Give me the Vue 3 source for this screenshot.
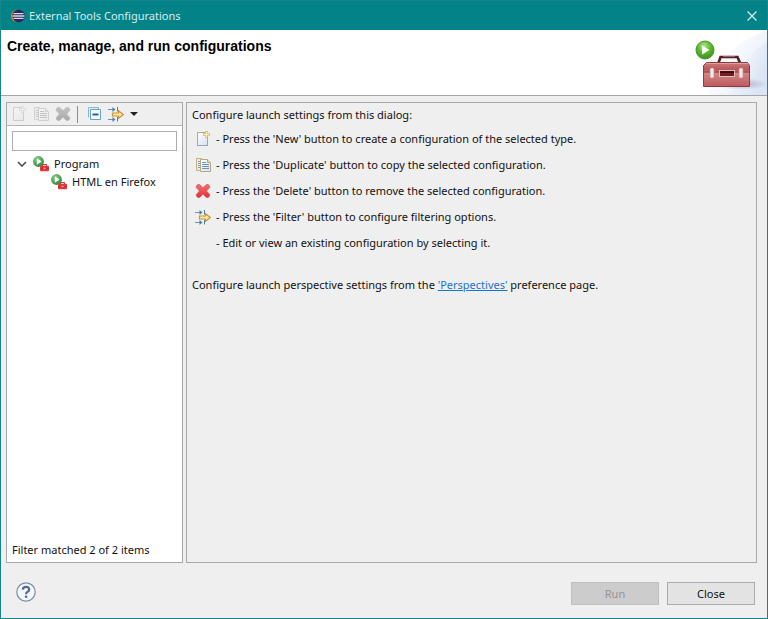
<script setup>
import { ref } from 'vue'

const filter = ref('')
const expanded = ref(true)

const tips = [
  { icon: 'new', text: "- Press the 'New' button to create a configuration of the selected type." },
  { icon: 'duplicate', text: "- Press the 'Duplicate' button to copy the selected configuration." },
  { icon: 'delete', text: "- Press the 'Delete' button to remove the selected configuration." },
  { icon: 'filter', text: "- Press the 'Filter' button to configure filtering options." },
  { icon: '', text: '- Edit or view an existing configuration by selecting it.' }
]
</script>

<template>
  <svg class="sprite" aria-hidden="true">
    <defs>
      <linearGradient id="paper" x1="0" y1="0" x2="1" y2="1">
        <stop offset="0" stop-color="#ffffff" />
        <stop offset="1" stop-color="#d3e1f3" />
      </linearGradient>
      <linearGradient id="redcross" x1="0" y1="0" x2="0" y2="1">
        <stop offset="0" stop-color="#f4726f" />
        <stop offset="1" stop-color="#e22f36" />
      </linearGradient>
      <radialGradient id="green" cx="0.4" cy="0.3" r="0.75">
        <stop offset="0" stop-color="#8ed08a" />
        <stop offset="0.55" stop-color="#4fa658" />
        <stop offset="1" stop-color="#2c8540" />
      </radialGradient>
      <symbol id="i-new" viewBox="0 0 16 16">
        <path d="M2.500 1.500h8l2 3v10h-10z" fill="url(#paper)" stroke="#b5a983" />
        <path d="M2.500 14.500h10v-6" fill="none" stroke="#95a5bb" />
        <path d="M11.500 0v7M8 3.500h7" stroke="#d8bd72" stroke-width="2.400" />
        <path d="M11.500 1v5M9 3.500h5" stroke="#fff2b8" />
      </symbol>
      <symbol id="i-duplicate" viewBox="0 0 16 16">
        <path d="M1.500 1.500h5l2 2v10h-7z" fill="#e6edf5" stroke="#c2b184" />
        <path d="M3 4.500h2M3 6.500h2M3 8.500h2M3 10.500h2" stroke="#7d9bc6" />
        <path d="M5.500 2.500h7l3 3v9h-10z" fill="url(#paper)" stroke="#b9a876" />
        <path d="M12.500 2.500v3h3" fill="#f0dda0" stroke="#b9a876" />
        <path d="M7 5.500h4M7 7.500h7M7 9.500h7M7 11.500h7" stroke="#6f90c2" />
      </symbol>
      <symbol id="i-delete" viewBox="0 0 16 16">
        <path d="M4.200 1.300 8 4.700l3.800-3.400q2.800.2 3.100 3L11.500 8l3.400 3.700q-.3 2.800-3.100 3L8 11.300l-3.800 3.400q-2.800-.2-3.100-3L4.500 8 1.100 4.300q.3-2.800 3.100-3z" fill="url(#redcross)" stroke="#d9585b" stroke-width=".8" />
      </symbol>
      <symbol id="i-filter" viewBox="0 0 16 16">
        <path d="M0 3.500h7M0 13.500h7" stroke="#6795b4" />
        <path d="m4.500 1 3 2.500-3 2.500zM4.500 11l3 2.500-3 2.500z" fill="#4d80a3" />
        <path d="M9.500 1v4.500M9.500 11v4.500" stroke="#4d80a3" />
        <path d="M4.500 7h6V4.800l4.800 3.700-4.800 3.700V10h-6z" fill="#fce9ad" stroke="#cd9232" stroke-width="1.200" />
      </symbol>
      <symbol id="i-collapse" viewBox="0 0 16 16">
        <path d="M2.500 11.500v-10h10v2" fill="#e2edf5" stroke="#8bb4cf" />
        <path d="M4.500 3.500h10v10h-10z" fill="#f3faff" stroke="#6aa3c8" />
        <path d="M6.500 8.500h6" stroke="#24679c" stroke-width="2" />
      </symbol>
      <symbol id="i-tool" viewBox="0 0 16 16">
        <circle cx="5.500" cy="5.500" r="5.400" fill="url(#green)" />
        <path d="M3.800 2.300v6.400l4.800-3.200z" fill="#fff" />
        <path d="M9.500 10V8.500h4V10" fill="none" stroke="#c23a3c" />
        <rect x="7" y="9.700" width="9" height="5.600" rx="1" fill="#e2383c" />
        <path d="M7.500 12.300h8" stroke="#b4262c" stroke-width=".8" />
        <path d="M10.500 12.300h2" stroke="#ffc9c5" />
      </symbol>
    </defs>
  </svg>

  <main class="dialog">
    <header class="titlebar">
      <svg class="logo" viewBox="0 0 14 14" aria-hidden="true">
        <circle cx="6" cy="7" r="6" fill="#e58d2b" />
        <circle cx="7.500" cy="7" r="6.200" fill="#2d2559" />
        <path d="M2.500 4.700h10M1.500 7h12M2.500 9.300h10" stroke="#d9d8ec" stroke-width="1.300" />
      </svg>
      <span class="caption">External Tools Configurations</span>
      <button class="close" aria-label="Close window">
        <svg viewBox="0 0 10 10"><path d="m.5.500 9 9m0-9-9 9" stroke="#d5eced" stroke-width="1.300" /></svg>
      </button>
    </header>

    <section class="banner">
      <h1>Create, manage, and run configurations</h1>
      <svg class="art" viewBox="0 0 80 65" aria-hidden="true">
        <defs>
          <linearGradient id="sky" x1="0.100" y1="0" x2="1" y2="0.500">
            <stop offset="0.100" stop-color="#fff" />
            <stop offset="1" stop-color="#d3dff3" />
          </linearGradient>
          <linearGradient id="box" x1="0" y1="0" x2="0" y2="1">
            <stop offset="0" stop-color="#cf7c7c" />
            <stop offset="0.300" stop-color="#b9575a" />
            <stop offset="0.420" stop-color="#d38787" />
            <stop offset="1" stop-color="#bd595c" />
          </linearGradient>
          <radialGradient id="ball" cx="0.450" cy="0.300" r="0.700">
            <stop offset="0" stop-color="#b4e88c" />
            <stop offset="0.500" stop-color="#5dbb2c" />
            <stop offset="1" stop-color="#3a9020" />
          </radialGradient>
          <radialGradient id="shade">
            <stop offset="0" stop-color="#8c7c9c" stop-opacity=".65" />
            <stop offset="1" stop-color="#9c94b8" stop-opacity="0" />
          </radialGradient>
        </defs>
        <path d="M80 0v65H20Q28 20 80 0z" fill="url(#sky)" opacity=".45" />
        <path d="M80 12v53H40Q50 30 80 12z" fill="url(#sky)" opacity=".7" />
        <ellipse cx="54" cy="54" rx="27" ry="6" fill="url(#shade)" />
        <path d="m31.500 33 2-6h17l2.500 6" fill="none" stroke="#542025" stroke-width="2.600" />
        <path d="M36 26.500h12" stroke="#9b6468" />
        <path d="M19.500 32.500h41l2 3v21h-46v-21z" fill="url(#box)" stroke="#8a3c40" />
        <path d="M19 33.500h42" stroke="#dfa0a0" />
        <path d="M17 42h45" stroke="#8c3035" />
        <rect x="32" y="40" width="16" height="7" fill="#e7bcbb" />
        <rect x="33" y="41" width="14" height="5" fill="#702025" />
        <path d="M33 42h14" stroke="#3d0d12" stroke-width="2" />
        <rect x="23" y="38" width="4" height="10" rx="1" fill="#f1e9e7" stroke="#b98a88" stroke-width=".7" />
        <rect x="52" y="38" width="4" height="10" rx="1" fill="#f1e9e7" stroke="#b98a88" stroke-width=".7" />
        <circle cx="18" cy="20" r="9" fill="url(#ball)" stroke="#4b9338" />
        <path d="M15 15.500v9l7.500-4.500z" fill="#fff" />
      </svg>
    </section>

    <div class="content">
      <section class="side">
        <div class="toolbar">
          <button disabled aria-label="New"><svg><use href="#i-new" /></svg></button>
          <button disabled aria-label="Duplicate"><svg><use href="#i-duplicate" /></svg></button>
          <button disabled aria-label="Delete"><svg><use href="#i-delete" /></svg></button>
          <span class="divider"></span>
          <button aria-label="Collapse all" @click="expanded = false"><svg><use href="#i-collapse" /></svg></button>
          <button aria-label="Filter"><svg><use href="#i-filter" /></svg></button>
          <button class="arrow" aria-label="Filter menu"><svg viewBox="0 0 8 4"><path d="M0 0h8L4 4z" fill="#222" /></svg></button>
        </div>
        <input v-model="filter" class="filter" type="text" aria-label="Filter text" />
        <ul class="tree">
          <li>
            <div class="node">
              <button class="twisty" aria-label="Toggle Program" @click="expanded = !expanded">
                <svg viewBox="0 0 10 6"><path d="m1 1 4 4 4-4" fill="none" stroke="#4c4c4c" stroke-width="1.600" /></svg>
              </button>
              <svg class="icon"><use href="#i-tool" /></svg>
              <span>Program</span>
            </div>
            <ul v-if="expanded" class="children">
              <li class="node">
                <svg class="icon"><use href="#i-tool" /></svg>
                <span>HTML en Firefox</span>
              </li>
            </ul>
          </li>
        </ul>
        <p class="status">Filter matched 2 of 2 items</p>
      </section>

      <section class="detail">
        <p>Configure launch settings from this dialog:</p>
        <ul class="tips">
          <li v-for="tip in tips" :key="tip.text">
            <svg class="icon"><use v-if="tip.icon" :href="'#i-' + tip.icon" /></svg>
            <span>{{ tip.text }}</span>
          </li>
        </ul>
        <p>Configure launch perspective settings from the <a href="#perspectives">'Perspectives'</a> preference page.</p>
      </section>
    </div>

    <footer class="footer">
      <button class="help" aria-label="Help">
        <svg viewBox="0 0 20 20">
          <circle cx="10" cy="10" r="9.200" fill="#f4f6fa" stroke="#7d8ca8" stroke-width="1.200" />
          <path d="M6.800 7.600Q7 4.900 10 4.900t3.200 2.500q0 1.500-1.700 2.500-1.400.8-1.400 2.300" fill="none" stroke="#536a91" stroke-width="2.200" />
          <circle cx="10.100" cy="14.800" r="1.300" fill="#536a91" />
        </svg>
      </button>
      <button class="action" disabled>Run</button>
      <button class="action">Close</button>
    </footer>
  </main>
</template>

<style>
body {
  margin: 0;
}
</style>

<style scoped>
.sprite {
  position: absolute;
  width: 0;
  height: 0;
}
.dialog {
  box-sizing: border-box;
  min-height: 100vh;
  display: flex;
  flex-direction: column;
  border: 1px solid #12878a;
  background: #efefef;
  color: #111;
  font-family: "Noto Sans", "Open Sans", sans-serif;
  font-size: 11px;
  line-height: 18px;
}
button {
  padding: 0;
  border: 0;
  background: none;
  font: inherit;
  color: inherit;
}
svg {
  display: block;
}
ul {
  margin: 0;
  padding: 0;
  list-style: none;
}
p,
h1 {
  margin: 0;
}
.titlebar {
  display: flex;
  align-items: center;
  height: 29px;
  padding: 0 10px;
  background: #038387;
  color: #d5eced;
}
.logo {
  width: 14px;
  height: 14px;
}
.caption {
  flex: 1;
  margin-left: 4px;
}
.close svg {
  width: 10px;
  height: 10px;
}
.banner {
  display: flex;
  justify-content: space-between;
  height: 65px;
  padding-left: 6px;
  border-bottom: 1px solid #a5a5a5;
  background: #fff;
}
.banner h1 {
  padding-top: 7px;
  color: #000;
  font-family: "Liberation Sans", Arial, sans-serif;
  font-size: 14px;
  line-height: 18px;
}
.art {
  width: 80px;
  height: 65px;
}
.content {
  flex: 1;
  display: grid;
  grid-template-columns: 177px 1fr;
  gap: 3px;
  padding: 6px 10px 0 5px;
}
.side,
.detail {
  border: 1px solid #a9a9a9;
}
.side {
  display: flex;
  flex-direction: column;
  background: #fff;
}
.toolbar {
  display: flex;
  align-items: center;
  gap: 6px;
  height: 22px;
  padding-left: 4px;
  border-bottom: 1px solid #b4b4b4;
  background: #efefef;
}
.toolbar svg,
.icon {
  width: 16px;
  height: 16px;
}
.toolbar button:disabled {
  filter: grayscale(1);
  opacity: 0.45;
}
.divider {
  width: 1px;
  height: 17px;
  margin-right: 2px;
  background: #8b8b8b;
}
.toolbar .arrow svg {
  width: 8px;
  height: 4px;
}
.filter {
  height: 20px;
  margin: 5px 5px 4px;
  padding: 0 4px;
  box-sizing: border-box;
  border: 1px solid #abadb3;
  background: #fff;
  font: inherit;
}
.tree {
  flex: 1;
}
.node {
  display: flex;
  align-items: center;
  gap: 5px;
  padding-left: 10px;
}
.twisty {
  margin-right: 1px;
}
.twisty svg {
  width: 10px;
  height: 6px;
}
.children .node {
  padding-left: 44px;
}
.status {
  padding: 0 5px 3px;
}
.detail {
  padding: 3px 5px;
}
.tips {
  padding: 2px 3px 20px;
}
.tips li {
  display: flex;
  align-items: center;
  gap: 5px;
  min-height: 26px;
}
a {
  color: #1a73cf;
}
.footer {
  display: flex;
  align-items: flex-start;
  gap: 8px;
  padding: 19px 12px 13px 15px;
}
.help {
  margin-right: auto;
}
.help svg {
  width: 20px;
  height: 20px;
}
.action {
  box-sizing: border-box;
  width: 88px;
  height: 23px;
  border: 1px solid #acacac;
  background: #e3e3e3;
}
.action:disabled {
  border-color: #bfbfbf;
  background: #cccccc;
  color: #939393;
}
</style>
